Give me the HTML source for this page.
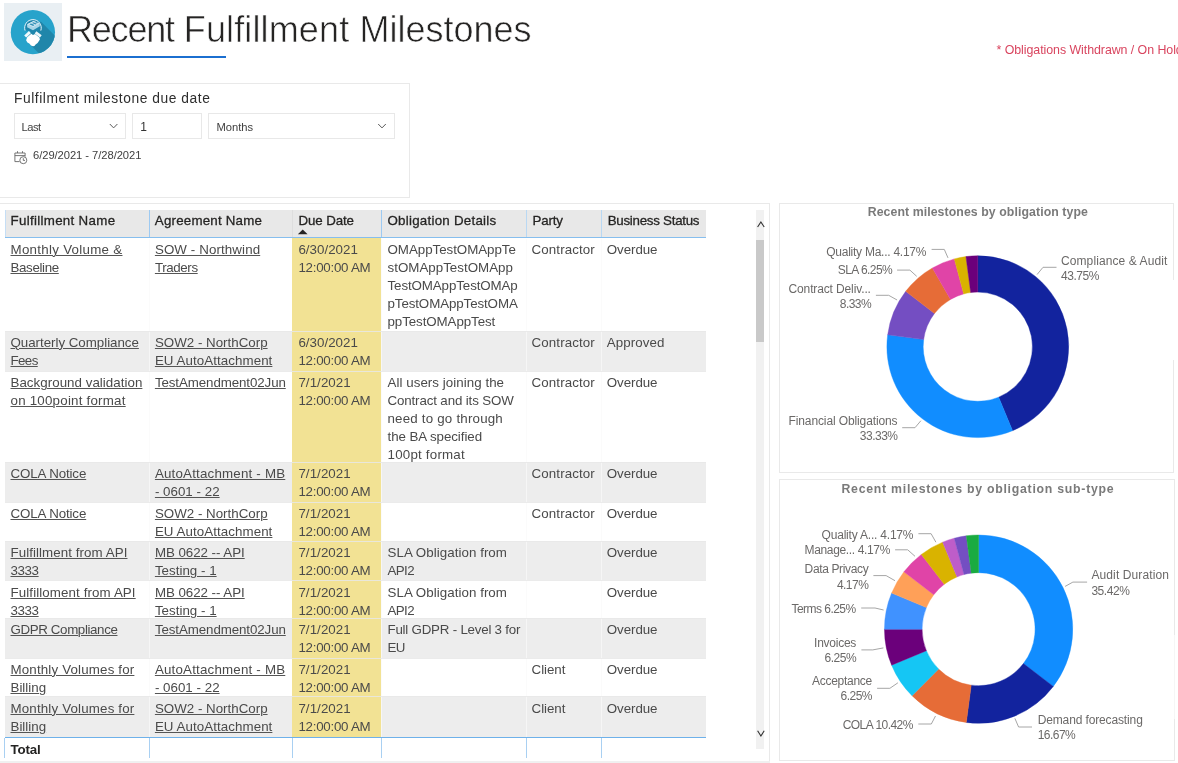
<!DOCTYPE html>
<html><head><meta charset="utf-8"><title>Recent Fulfillment Milestones</title>
<style>
html,body{margin:0;padding:0;background:#fff;}
body{width:1178px;height:763px;position:relative;overflow:hidden;font-family:"Liberation Sans",sans-serif;}
.t{position:absolute;white-space:nowrap;}
.b{position:absolute;box-sizing:border-box;}
.u{text-decoration:underline;text-decoration-thickness:1px;text-underline-offset:1px;text-decoration-color:#555;}
svg{position:absolute;left:0;top:0;}
</style></head><body><div id="root" style="position:absolute;left:0;top:0;width:1178px;height:763px;will-change:transform;background:#fff;overflow:hidden;">

<div class="b" style="left:4px;top:3px;width:58px;height:58px;background:#e9eff3;"></div>
<svg width="70" height="70" viewBox="0 0 70 70">
<defs><clipPath id="cc"><circle cx="32.9" cy="32.2" r="22.1"/></clipPath></defs>
<circle cx="32.9" cy="32.2" r="22.1" fill="#27a3cb"/>
<g clip-path="url(#cc)"><path d="M40.8 21.5 L62 42.7 L62 62 L47.5 62 L31.8 46.3 L27 38 L33 28 Z" fill="#2086aa"/></g>
<path d="M25.1 30.6 A8.3 8.3 0 1 1 40.8 30.6 L37.5 30.8 L33 33 L28.4 30.8 Z" fill="#1f86ad"/>
<path d="M25.1 30.6 A8.3 8.3 0 1 1 40.8 30.6" fill="none" stroke="#eaf6fb" stroke-width="1"/>
<path d="M27.1 24.2 L33.6 20.9 L39.8 23.2 L39.8 26.2 L33 30.2 L27.1 27.2 Z" fill="#a9d5e7"/>
<path d="M27.1 24.2 L33.6 20.9 L39.8 23.2 L33.2 26.9 Z" fill="#d2e9f3"/>
<path d="M29.3 24.3 L31 23.4 L34.6 25 L33.1 25.9 Z M31.9 23 L33.4 22.2 L37 23.7 L35.6 24.5 Z M34.4 21.8 L35.4 21.4 L38.6 22.8 L37.8 23.3 Z" fill="#2f8fb6"/>
<path d="M24.2 35.4 L28.9 31.1 L30.9 33.3 L26.2 37.6 Z" fill="#fff" fill-opacity="0.93"/>
<path d="M36.4 31.2 L41.7 35.2 L39.9 37.5 L34.7 33.5 Z" fill="#fff" fill-opacity="0.93"/>
<path d="M27.2 37.2 L31.3 33.8 L33 35 L35 33.9 L39.4 37.6 L39.9 39.6 L38.6 41.5 L37.6 43 L35.6 44.6 L34.4 46 L32.9 46.2 L31 45.4 L29.3 43.6 L27.4 42.4 L26.1 40.2 Z" fill="#fff"/>
</svg>

<div class="t" style="left:67.00px;top:6.00px;font-size:36.00px;line-height:47px;color:#252423;letter-spacing:-1.211px;-webkit-text-stroke:0.6px #fff;">Recent</div>
<div class="t" style="left:183.80px;top:6.00px;font-size:36.00px;line-height:47px;color:#252423;letter-spacing:0.132px;-webkit-text-stroke:0.6px #fff;">Fulfillment</div>
<div class="t" style="left:359.60px;top:6.00px;font-size:36.00px;line-height:47px;color:#252423;letter-spacing:-0.008px;-webkit-text-stroke:0.6px #fff;">Milestones</div>
<div class="b" style="left:66.8px;top:56.3px;width:159px;height:2.2px;background:#1b6fd0;"></div>
<div class="t" style="left:996.50px;top:42.00px;font-size:12.40px;line-height:16px;color:#d9455f;letter-spacing:-0.056px;">* Obligations Withdrawn / On Hold</div>
<div class="b" style="left:-1px;top:83px;width:411px;height:115px;border:1px solid #e9e9e9;"></div>
<div class="t" style="left:14.00px;top:90.00px;font-size:13.80px;line-height:18px;color:#2e2e2e;letter-spacing:0.560px;">Fulfilment milestone due date</div>
<div class="b" style="left:14px;top:113px;width:112px;height:26px;border:1px solid #e8e8e8;"></div>
<div class="b" style="left:132px;top:113px;width:70px;height:26px;border:1px solid #e8e8e8;"></div>
<div class="b" style="left:208px;top:113px;width:187px;height:26px;border:1px solid #e8e8e8;"></div>
<div class="t" style="left:21.50px;top:120.00px;font-size:11.20px;line-height:15px;color:#404040;letter-spacing:-0.504px;">Last</div>
<div class="t" style="left:140.30px;top:119.00px;font-size:12.00px;line-height:16px;color:#333;">1</div>
<div class="t" style="left:216.50px;top:120.00px;font-size:11.20px;line-height:15px;color:#404040;letter-spacing:-0.038px;">Months</div>
<svg width="420" height="200"><path d="M109.8 124 L113.6 127.9 L117.4 124" fill="none" stroke="#5a5a5a" stroke-width="1"/><path d="M378.2 124 L382 127.9 L385.8 124" fill="none" stroke="#5a5a5a" stroke-width="1"/><g fill="none" stroke="#666" stroke-width="0.9"><path d="M19.6 161.6 H14.9 V153 H25.1 V156.6"/><path d="M14.9 155.6 H25.1"/><path d="M17.5 151.2 V153 M22.5 151.2 V153"/><circle cx="23.3" cy="160.2" r="3.5" fill="#fff"/><path d="M23.3 158.2 V160.4 H25"/></g></svg>
<div class="t" style="left:33.00px;top:148.00px;font-size:11.20px;line-height:15px;color:#404040;letter-spacing:-0.053px;">6/29/2021 - 7/28/2021</div>
<div class="b" style="left:-1px;top:203px;width:771px;height:562px;border:1px solid #e9e9e9;"></div>
<div class="b" style="left:0px;top:761px;width:770px;height:2px;background:#f0f0f0;"></div>
<div class="b" style="left:5px;top:210px;width:701px;height:27px;background:#e8e8e8;"></div>
<div class="b" style="left:5px;top:210px;width:1px;height:28px;background:#c5def5;"></div>
<div class="b" style="left:5px;top:236.6px;width:701px;height:1.9px;background:#86beee;"></div>
<div class="t" style="left:10.50px;top:212.00px;font-size:13.33px;line-height:17px;color:#252423;letter-spacing:0.306px;-webkit-text-stroke:0.28px #252423;">Fulfillment Name</div>
<div class="t" style="left:154.80px;top:212.00px;font-size:13.33px;line-height:17px;color:#252423;letter-spacing:0.209px;-webkit-text-stroke:0.28px #252423;">Agreement Name</div>
<div class="b" style="left:148.5px;top:210px;width:1px;height:27px;background:#9dcaf2;"></div>
<div class="t" style="left:298.40px;top:212.00px;font-size:13.33px;line-height:17px;color:#252423;letter-spacing:-0.102px;-webkit-text-stroke:0.28px #252423;">Due Date</div>
<div class="b" style="left:291.5px;top:210px;width:1px;height:27px;background:#dedede;"></div>
<div class="t" style="left:387.50px;top:212.00px;font-size:13.33px;line-height:17px;color:#252423;letter-spacing:0.246px;-webkit-text-stroke:0.28px #252423;">Obligation Details</div>
<div class="b" style="left:380.5px;top:210px;width:1px;height:27px;background:#9dcaf2;"></div>
<div class="t" style="left:532.60px;top:212.00px;font-size:13.33px;line-height:17px;color:#252423;letter-spacing:-0.223px;-webkit-text-stroke:0.28px #252423;">Party</div>
<div class="b" style="left:525.5px;top:210px;width:1px;height:27px;background:#b9d8f3;"></div>
<div class="t" style="left:607.70px;top:212.00px;font-size:13.33px;line-height:17px;color:#252423;letter-spacing:-0.266px;-webkit-text-stroke:0.28px #252423;">Business Status</div>
<div class="b" style="left:600.5px;top:210px;width:1px;height:27px;background:#b9d8f3;"></div>
<svg width="400" height="240"><path d="M297.9 234.2 L302.75 229.4 L307.6 234.2 Z" fill="#252423"/></svg>
<div class="b" style="left:292px;top:238px;width:89px;height:93px;background:#f2e294;"></div>
<div class="t u" style="left:10.50px;top:241.00px;font-size:13.33px;line-height:17px;color:#4a4a4a;letter-spacing:0.285px;">Monthly Volume &amp;</div>
<div class="t u" style="left:10.50px;top:259.00px;font-size:13.33px;line-height:17px;color:#4a4a4a;letter-spacing:-0.354px;">Baseline</div>
<div class="t u" style="left:154.90px;top:241.00px;font-size:13.33px;line-height:17px;color:#4a4a4a;letter-spacing:0.107px;">SOW - Northwind</div>
<div class="t u" style="left:154.90px;top:259.00px;font-size:13.33px;line-height:17px;color:#4a4a4a;letter-spacing:-0.376px;">Traders</div>
<div class="t" style="left:298.40px;top:241.00px;font-size:13.33px;line-height:17px;color:#4a4a4a;letter-spacing:0.022px;">6/30/2021</div>
<div class="t" style="left:298.40px;top:259.00px;font-size:13.33px;line-height:17px;color:#4a4a4a;letter-spacing:-0.259px;">12:00:00 AM</div>
<div class="t" style="left:387.50px;top:241.00px;font-size:13.33px;line-height:17px;color:#4a4a4a;letter-spacing:-0.032px;">OMAppTestOMAppTe</div>
<div class="t" style="left:387.50px;top:259.00px;font-size:13.33px;line-height:17px;color:#4a4a4a;letter-spacing:0.019px;">stOMAppTestOMApp</div>
<div class="t" style="left:387.50px;top:277.00px;font-size:13.33px;line-height:17px;color:#4a4a4a;letter-spacing:-0.098px;">TestOMAppTestOMAp</div>
<div class="t" style="left:387.50px;top:295.00px;font-size:13.33px;line-height:17px;color:#4a4a4a;letter-spacing:-0.098px;">pTestOMAppTestOMA</div>
<div class="t" style="left:387.50px;top:313.00px;font-size:13.33px;line-height:17px;color:#4a4a4a;letter-spacing:-0.081px;">ppTestOMAppTest</div>
<div class="t" style="left:531.60px;top:241.00px;font-size:13.33px;line-height:17px;color:#4a4a4a;letter-spacing:0.107px;">Contractor</div>
<div class="t" style="left:606.80px;top:241.00px;font-size:13.33px;line-height:17px;color:#4a4a4a;letter-spacing:-0.075px;">Overdue</div>
<div class="b" style="left:5px;top:331px;width:701px;height:40px;background:#ededed;"></div>
<div class="b" style="left:292px;top:331px;width:89px;height:40px;background:#f2e294;"></div>
<div class="t u" style="left:10.50px;top:334.00px;font-size:13.33px;line-height:17px;color:#4a4a4a;letter-spacing:-0.026px;">Quarterly Compliance</div>
<div class="t u" style="left:10.50px;top:352.00px;font-size:13.33px;line-height:17px;color:#4a4a4a;letter-spacing:-0.600px;">Fees</div>
<div class="t u" style="left:154.90px;top:334.00px;font-size:13.33px;line-height:17px;color:#4a4a4a;letter-spacing:0.007px;">SOW2 - NorthCorp</div>
<div class="t u" style="left:154.90px;top:352.00px;font-size:13.33px;line-height:17px;color:#4a4a4a;letter-spacing:0.069px;">EU AutoAttachment</div>
<div class="t" style="left:298.40px;top:334.00px;font-size:13.33px;line-height:17px;color:#4a4a4a;letter-spacing:0.022px;">6/30/2021</div>
<div class="t" style="left:298.40px;top:352.00px;font-size:13.33px;line-height:17px;color:#4a4a4a;letter-spacing:-0.259px;">12:00:00 AM</div>
<div class="t" style="left:531.60px;top:334.00px;font-size:13.33px;line-height:17px;color:#4a4a4a;letter-spacing:0.107px;">Contractor</div>
<div class="t" style="left:606.80px;top:334.00px;font-size:13.33px;line-height:17px;color:#4a4a4a;letter-spacing:0.079px;">Approved</div>
<div class="b" style="left:292px;top:371px;width:89px;height:91px;background:#f2e294;"></div>
<div class="t u" style="left:10.50px;top:374.00px;font-size:13.33px;line-height:17px;color:#4a4a4a;letter-spacing:0.035px;">Background validation</div>
<div class="t u" style="left:10.50px;top:392.00px;font-size:13.33px;line-height:17px;color:#4a4a4a;letter-spacing:0.224px;">on 100point format</div>
<div class="t u" style="left:154.90px;top:374.00px;font-size:13.33px;line-height:17px;color:#4a4a4a;letter-spacing:-0.097px;">TestAmendment02Jun</div>
<div class="t" style="left:298.40px;top:374.00px;font-size:13.33px;line-height:17px;color:#4a4a4a;letter-spacing:0.064px;">7/1/2021</div>
<div class="t" style="left:298.40px;top:392.00px;font-size:13.33px;line-height:17px;color:#4a4a4a;letter-spacing:-0.259px;">12:00:00 AM</div>
<div class="t" style="left:387.50px;top:374.00px;font-size:13.33px;line-height:17px;color:#4a4a4a;letter-spacing:0.048px;">All users joining the</div>
<div class="t" style="left:387.50px;top:392.00px;font-size:13.33px;line-height:17px;color:#4a4a4a;letter-spacing:-0.135px;">Contract and its SOW</div>
<div class="t" style="left:387.50px;top:410.00px;font-size:13.33px;line-height:17px;color:#4a4a4a;letter-spacing:0.199px;">need to go through</div>
<div class="t" style="left:387.50px;top:428.00px;font-size:13.33px;line-height:17px;color:#4a4a4a;letter-spacing:-0.069px;">the BA specified</div>
<div class="t" style="left:387.50px;top:446.00px;font-size:13.33px;line-height:17px;color:#4a4a4a;letter-spacing:0.213px;">100pt format</div>
<div class="t" style="left:531.60px;top:374.00px;font-size:13.33px;line-height:17px;color:#4a4a4a;letter-spacing:0.107px;">Contractor</div>
<div class="t" style="left:606.80px;top:374.00px;font-size:13.33px;line-height:17px;color:#4a4a4a;letter-spacing:-0.075px;">Overdue</div>
<div class="b" style="left:5px;top:462px;width:701px;height:40px;background:#ededed;"></div>
<div class="b" style="left:292px;top:462px;width:89px;height:40px;background:#f2e294;"></div>
<div class="t u" style="left:10.50px;top:465.00px;font-size:13.33px;line-height:17px;color:#4a4a4a;letter-spacing:-0.123px;">COLA Notice</div>
<div class="t u" style="left:154.90px;top:465.00px;font-size:13.33px;line-height:17px;color:#4a4a4a;letter-spacing:0.195px;">AutoAttachment - MB</div>
<div class="t u" style="left:154.90px;top:483.00px;font-size:13.33px;line-height:17px;color:#4a4a4a;letter-spacing:0.021px;">- 0601 - 22</div>
<div class="t" style="left:298.40px;top:465.00px;font-size:13.33px;line-height:17px;color:#4a4a4a;letter-spacing:0.064px;">7/1/2021</div>
<div class="t" style="left:298.40px;top:483.00px;font-size:13.33px;line-height:17px;color:#4a4a4a;letter-spacing:-0.259px;">12:00:00 AM</div>
<div class="t" style="left:531.60px;top:465.00px;font-size:13.33px;line-height:17px;color:#4a4a4a;letter-spacing:0.107px;">Contractor</div>
<div class="t" style="left:606.80px;top:465.00px;font-size:13.33px;line-height:17px;color:#4a4a4a;letter-spacing:-0.075px;">Overdue</div>
<div class="b" style="left:292px;top:502px;width:89px;height:39px;background:#f2e294;"></div>
<div class="t u" style="left:10.50px;top:505.00px;font-size:13.33px;line-height:17px;color:#4a4a4a;letter-spacing:-0.123px;">COLA Notice</div>
<div class="t u" style="left:154.90px;top:505.00px;font-size:13.33px;line-height:17px;color:#4a4a4a;letter-spacing:0.007px;">SOW2 - NorthCorp</div>
<div class="t u" style="left:154.90px;top:523.00px;font-size:13.33px;line-height:17px;color:#4a4a4a;letter-spacing:0.069px;">EU AutoAttachment</div>
<div class="t" style="left:298.40px;top:505.00px;font-size:13.33px;line-height:17px;color:#4a4a4a;letter-spacing:0.064px;">7/1/2021</div>
<div class="t" style="left:298.40px;top:523.00px;font-size:13.33px;line-height:17px;color:#4a4a4a;letter-spacing:-0.259px;">12:00:00 AM</div>
<div class="t" style="left:531.60px;top:505.00px;font-size:13.33px;line-height:17px;color:#4a4a4a;letter-spacing:0.107px;">Contractor</div>
<div class="t" style="left:606.80px;top:505.00px;font-size:13.33px;line-height:17px;color:#4a4a4a;letter-spacing:-0.075px;">Overdue</div>
<div class="b" style="left:5px;top:541px;width:701px;height:39px;background:#ededed;"></div>
<div class="b" style="left:292px;top:541px;width:89px;height:39px;background:#f2e294;"></div>
<div class="t u" style="left:10.50px;top:544.00px;font-size:13.33px;line-height:17px;color:#4a4a4a;letter-spacing:0.072px;">Fulfillment from API</div>
<div class="t u" style="left:10.50px;top:562.00px;font-size:13.33px;line-height:17px;color:#4a4a4a;letter-spacing:-0.389px;">3333</div>
<div class="t u" style="left:154.90px;top:544.00px;font-size:13.33px;line-height:17px;color:#4a4a4a;letter-spacing:-0.042px;">MB 0622 -- API</div>
<div class="t u" style="left:154.90px;top:562.00px;font-size:13.33px;line-height:17px;color:#4a4a4a;letter-spacing:0.019px;">Testing - 1</div>
<div class="t" style="left:298.40px;top:544.00px;font-size:13.33px;line-height:17px;color:#4a4a4a;letter-spacing:0.064px;">7/1/2021</div>
<div class="t" style="left:298.40px;top:562.00px;font-size:13.33px;line-height:17px;color:#4a4a4a;letter-spacing:-0.259px;">12:00:00 AM</div>
<div class="t" style="left:387.50px;top:544.00px;font-size:13.33px;line-height:17px;color:#4a4a4a;letter-spacing:0.050px;">SLA Obligation from</div>
<div class="t" style="left:387.50px;top:562.00px;font-size:13.33px;line-height:17px;color:#4a4a4a;letter-spacing:-0.600px;">API2</div>
<div class="t" style="left:606.80px;top:544.00px;font-size:13.33px;line-height:17px;color:#4a4a4a;letter-spacing:-0.075px;">Overdue</div>
<div class="b" style="left:292px;top:580px;width:89px;height:38px;background:#f2e294;"></div>
<div class="t u" style="left:10.50px;top:584.00px;font-size:13.33px;line-height:17px;color:#4a4a4a;letter-spacing:0.106px;">Fulfilloment from API</div>
<div class="t u" style="left:10.50px;top:602.00px;font-size:13.33px;line-height:17px;color:#4a4a4a;letter-spacing:-0.389px;">3333</div>
<div class="t u" style="left:154.90px;top:584.00px;font-size:13.33px;line-height:17px;color:#4a4a4a;letter-spacing:-0.042px;">MB 0622 -- API</div>
<div class="t u" style="left:154.90px;top:602.00px;font-size:13.33px;line-height:17px;color:#4a4a4a;letter-spacing:0.019px;">Testing - 1</div>
<div class="t" style="left:298.40px;top:584.00px;font-size:13.33px;line-height:17px;color:#4a4a4a;letter-spacing:0.064px;">7/1/2021</div>
<div class="t" style="left:298.40px;top:602.00px;font-size:13.33px;line-height:17px;color:#4a4a4a;letter-spacing:-0.259px;">12:00:00 AM</div>
<div class="t" style="left:387.50px;top:584.00px;font-size:13.33px;line-height:17px;color:#4a4a4a;letter-spacing:0.050px;">SLA Obligation from</div>
<div class="t" style="left:387.50px;top:602.00px;font-size:13.33px;line-height:17px;color:#4a4a4a;letter-spacing:-0.600px;">API2</div>
<div class="t" style="left:606.80px;top:584.00px;font-size:13.33px;line-height:17px;color:#4a4a4a;letter-spacing:-0.075px;">Overdue</div>
<div class="b" style="left:5px;top:618px;width:701px;height:40px;background:#ededed;"></div>
<div class="b" style="left:292px;top:618px;width:89px;height:40px;background:#f2e294;"></div>
<div class="t u" style="left:10.50px;top:621.00px;font-size:13.33px;line-height:17px;color:#4a4a4a;letter-spacing:-0.374px;">GDPR Compliance</div>
<div class="t u" style="left:154.90px;top:621.00px;font-size:13.33px;line-height:17px;color:#4a4a4a;letter-spacing:-0.097px;">TestAmendment02Jun</div>
<div class="t" style="left:298.40px;top:621.00px;font-size:13.33px;line-height:17px;color:#4a4a4a;letter-spacing:0.064px;">7/1/2021</div>
<div class="t" style="left:298.40px;top:639.00px;font-size:13.33px;line-height:17px;color:#4a4a4a;letter-spacing:-0.259px;">12:00:00 AM</div>
<div class="t" style="left:387.50px;top:621.00px;font-size:13.33px;line-height:17px;color:#4a4a4a;letter-spacing:-0.221px;">Full GDPR - Level 3 for</div>
<div class="t" style="left:387.50px;top:639.00px;font-size:13.33px;line-height:17px;color:#4a4a4a;letter-spacing:-0.600px;">EU</div>
<div class="t" style="left:606.80px;top:621.00px;font-size:13.33px;line-height:17px;color:#4a4a4a;letter-spacing:-0.075px;">Overdue</div>
<div class="b" style="left:292px;top:658px;width:89px;height:38px;background:#f2e294;"></div>
<div class="t u" style="left:10.50px;top:661.00px;font-size:13.33px;line-height:17px;color:#4a4a4a;letter-spacing:0.165px;">Monthly Volumes for</div>
<div class="t u" style="left:10.50px;top:679.00px;font-size:13.33px;line-height:17px;color:#4a4a4a;letter-spacing:0.005px;">Billing</div>
<div class="t u" style="left:154.90px;top:661.00px;font-size:13.33px;line-height:17px;color:#4a4a4a;letter-spacing:0.195px;">AutoAttachment - MB</div>
<div class="t u" style="left:154.90px;top:679.00px;font-size:13.33px;line-height:17px;color:#4a4a4a;letter-spacing:0.021px;">- 0601 - 22</div>
<div class="t" style="left:298.40px;top:661.00px;font-size:13.33px;line-height:17px;color:#4a4a4a;letter-spacing:0.064px;">7/1/2021</div>
<div class="t" style="left:298.40px;top:679.00px;font-size:13.33px;line-height:17px;color:#4a4a4a;letter-spacing:-0.259px;">12:00:00 AM</div>
<div class="t" style="left:531.60px;top:661.00px;font-size:13.33px;line-height:17px;color:#4a4a4a;letter-spacing:-0.047px;">Client</div>
<div class="t" style="left:606.80px;top:661.00px;font-size:13.33px;line-height:17px;color:#4a4a4a;letter-spacing:-0.075px;">Overdue</div>
<div class="b" style="left:5px;top:696px;width:701px;height:41px;background:#ededed;"></div>
<div class="b" style="left:292px;top:696px;width:89px;height:41px;background:#f2e294;"></div>
<div class="t u" style="left:10.50px;top:700.00px;font-size:13.33px;line-height:17px;color:#4a4a4a;letter-spacing:0.165px;">Monthly Volumes for</div>
<div class="t u" style="left:10.50px;top:718.00px;font-size:13.33px;line-height:17px;color:#4a4a4a;letter-spacing:0.005px;">Billing</div>
<div class="t u" style="left:154.90px;top:700.00px;font-size:13.33px;line-height:17px;color:#4a4a4a;letter-spacing:0.007px;">SOW2 - NorthCorp</div>
<div class="t u" style="left:154.90px;top:718.00px;font-size:13.33px;line-height:17px;color:#4a4a4a;letter-spacing:0.069px;">EU AutoAttachment</div>
<div class="t" style="left:298.40px;top:700.00px;font-size:13.33px;line-height:17px;color:#4a4a4a;letter-spacing:0.064px;">7/1/2021</div>
<div class="t" style="left:298.40px;top:718.00px;font-size:13.33px;line-height:17px;color:#4a4a4a;letter-spacing:-0.259px;">12:00:00 AM</div>
<div class="t" style="left:531.60px;top:700.00px;font-size:13.33px;line-height:17px;color:#4a4a4a;letter-spacing:-0.047px;">Client</div>
<div class="t" style="left:606.80px;top:700.00px;font-size:13.33px;line-height:17px;color:#4a4a4a;letter-spacing:-0.075px;">Overdue</div>
<div class="b" style="left:149px;top:239px;width:1px;height:498px;background:rgba(250,250,250,0.7);"></div>
<div class="b" style="left:381px;top:239px;width:1px;height:498px;background:rgba(250,250,250,0.7);"></div>
<div class="b" style="left:526px;top:239px;width:1px;height:498px;background:rgba(250,250,250,0.7);"></div>
<div class="b" style="left:601px;top:239px;width:1px;height:498px;background:rgba(250,250,250,0.7);"></div>
<div class="b" style="left:5px;top:330.6px;width:701px;height:1px;background:rgba(231,231,231,0.85);"></div>
<div class="b" style="left:5px;top:370.6px;width:701px;height:1px;background:rgba(231,231,231,0.85);"></div>
<div class="b" style="left:5px;top:461.6px;width:701px;height:1px;background:rgba(231,231,231,0.85);"></div>
<div class="b" style="left:5px;top:501.6px;width:701px;height:1px;background:rgba(231,231,231,0.85);"></div>
<div class="b" style="left:5px;top:540.6px;width:701px;height:1px;background:rgba(231,231,231,0.85);"></div>
<div class="b" style="left:5px;top:579.6px;width:701px;height:1px;background:rgba(231,231,231,0.85);"></div>
<div class="b" style="left:5px;top:617.6px;width:701px;height:1px;background:rgba(231,231,231,0.85);"></div>
<div class="b" style="left:5px;top:657.6px;width:701px;height:1px;background:rgba(231,231,231,0.85);"></div>
<div class="b" style="left:5px;top:695.6px;width:701px;height:1px;background:rgba(231,231,231,0.85);"></div>
<div class="b" style="left:5px;top:737px;width:701px;height:1px;background:#6eb1ea;"></div>
<div class="b" style="left:4.4px;top:738px;width:1px;height:20px;background:#a9d0f2;"></div>
<div class="b" style="left:149.0px;top:738px;width:1px;height:20px;background:#a9d0f2;"></div>
<div class="b" style="left:292.0px;top:738px;width:1px;height:20px;background:#a9d0f2;"></div>
<div class="b" style="left:381.0px;top:738px;width:1px;height:20px;background:#a9d0f2;"></div>
<div class="b" style="left:526.0px;top:738px;width:1px;height:20px;background:#a9d0f2;"></div>
<div class="b" style="left:601.0px;top:738px;width:1px;height:20px;background:#a9d0f2;"></div>
<div class="t" style="left:10.50px;top:741.00px;font-size:13.33px;line-height:17px;color:#252423;font-weight:bold;letter-spacing:-0.151px;">Total</div>
<div class="b" style="left:756px;top:210px;width:8px;height:538.5px;background:#f1f1f1;"></div>
<div class="b" style="left:756px;top:240px;width:8px;height:102px;background:#c9c9c9;"></div>
<svg width="780" height="763"><path d="M757.6 227 L760.9 222 L764.2 227" fill="none" stroke="#333" stroke-width="1.1"/><path d="M757.6 730.8 L760.9 736 L764.2 730.8" fill="none" stroke="#333" stroke-width="1.1"/></svg>
<div class="b" style="left:779px;top:203px;width:395px;height:270px;border:1px solid #e9e9e9;"></div>
<div class="b" style="left:1172px;top:280px;width:3px;height:80px;background:#fff;"></div>
<div class="b" style="left:779px;top:479px;width:396px;height:282px;border:1px solid #e9e9e9;"></div>
<div class="b" style="left:1173px;top:635px;width:3px;height:84px;background:rgba(255,255,255,0.6);"></div>
<div class="t" style="left:867.70px;top:204.00px;font-size:12.30px;line-height:16px;color:#7a7a7a;font-weight:bold;letter-spacing:0.082px;">Recent milestones by obligation type</div>
<div class="t" style="left:841.50px;top:481.00px;font-size:12.30px;line-height:16px;color:#7a7a7a;font-weight:bold;letter-spacing:0.742px;">Recent milestones by obligation sub-type</div>
<svg width="1178" height="763">
<path d="M977.80 255.80A90.90 90.90 0 0 1 1012.56 430.69L998.68 397.15A54.60 54.60 0 0 0 977.80 292.10Z" fill="#12239e" stroke="#12239e" stroke-width="0.4"/>
<path d="M1012.56 430.69A90.90 90.90 0 0 1 887.68 334.81L923.67 339.56A54.60 54.60 0 0 0 998.68 397.15Z" fill="#118dff" stroke="#118dff" stroke-width="0.4"/>
<path d="M887.68 334.81A90.90 90.90 0 0 1 905.69 291.36L934.49 313.46A54.60 54.60 0 0 0 923.67 339.56Z" fill="#744ec2" stroke="#744ec2" stroke-width="0.4"/>
<path d="M905.69 291.36A90.90 90.90 0 0 1 932.36 267.97L950.51 299.41A54.60 54.60 0 0 0 934.49 313.46Z" fill="#e66c37" stroke="#e66c37" stroke-width="0.4"/>
<path d="M932.36 267.97A90.90 90.90 0 0 1 954.31 258.89L963.69 293.95A54.60 54.60 0 0 0 950.51 299.41Z" fill="#e044a7" stroke="#e044a7" stroke-width="0.4"/>
<path d="M954.31 258.89A90.90 90.90 0 0 1 965.95 256.58L970.68 292.57A54.60 54.60 0 0 0 963.69 293.95Z" fill="#d9b300" stroke="#d9b300" stroke-width="0.4"/>
<path d="M965.95 256.58A90.90 90.90 0 0 1 977.80 255.80L977.80 292.10A54.60 54.60 0 0 0 970.68 292.57Z" fill="#6b007b" stroke="#6b007b" stroke-width="0.4"/>
<path d="M978.60 535.00A94.15 94.15 0 0 1 1053.29 686.46L1023.42 663.54A56.50 56.50 0 0 0 978.60 572.65Z" fill="#118dff" stroke="#118dff" stroke-width="0.4"/>
<path d="M1053.29 686.46A94.15 94.15 0 0 1 966.30 722.49L971.22 685.17A56.50 56.50 0 0 0 1023.42 663.54Z" fill="#12239e" stroke="#12239e" stroke-width="0.4"/>
<path d="M966.30 722.49A94.15 94.15 0 0 1 912.01 695.71L938.64 669.09A56.50 56.50 0 0 0 971.22 685.17Z" fill="#e66c37" stroke="#e66c37" stroke-width="0.4"/>
<path d="M912.01 695.71A94.15 94.15 0 0 1 891.61 665.16L926.40 650.76A56.50 56.50 0 0 0 938.64 669.09Z" fill="#15c6f4" stroke="#15c6f4" stroke-width="0.4"/>
<path d="M891.61 665.16A94.15 94.15 0 0 1 884.45 629.14L922.10 629.14A56.50 56.50 0 0 0 926.40 650.76Z" fill="#6b007b" stroke="#6b007b" stroke-width="0.4"/>
<path d="M884.45 629.14A94.15 94.15 0 0 1 891.62 593.11L926.40 607.52A56.50 56.50 0 0 0 922.10 629.14Z" fill="#4092ff" stroke="#4092ff" stroke-width="0.4"/>
<path d="M891.62 593.11A94.15 94.15 0 0 1 903.92 571.81L933.79 594.74A56.50 56.50 0 0 0 926.40 607.52Z" fill="#ffa058" stroke="#ffa058" stroke-width="0.4"/>
<path d="M903.92 571.81A94.15 94.15 0 0 1 921.32 554.43L944.23 584.31A56.50 56.50 0 0 0 933.79 594.74Z" fill="#e044a7" stroke="#e044a7" stroke-width="0.4"/>
<path d="M921.32 554.43A94.15 94.15 0 0 1 942.63 542.14L957.01 576.94A56.50 56.50 0 0 0 944.23 584.31Z" fill="#d9b300" stroke="#d9b300" stroke-width="0.4"/>
<path d="M942.63 542.14A94.15 94.15 0 0 1 954.27 538.20L964.00 574.57A56.50 56.50 0 0 0 957.01 576.94Z" fill="#be5dc9" stroke="#be5dc9" stroke-width="0.4"/>
<path d="M954.27 538.20A94.15 94.15 0 0 1 966.33 535.80L971.24 573.13A56.50 56.50 0 0 0 964.00 574.57Z" fill="#744ec2" stroke="#744ec2" stroke-width="0.4"/>
<path d="M966.33 535.80A94.15 94.15 0 0 1 978.60 535.00L978.60 572.65A56.50 56.50 0 0 0 971.24 573.13Z" fill="#1aab40" stroke="#1aab40" stroke-width="0.4"/>
<polyline points="931.6,249.4 944.3,249.4 948.0,257.9" fill="none" stroke="#a6a6a6" stroke-width="1"/>
<polyline points="897.1,270.1 909.9,270.1 916.7,276.3" fill="none" stroke="#a6a6a6" stroke-width="1"/>
<polyline points="875.9,295.3 888.7,295.3 897.1,300.0" fill="none" stroke="#a6a6a6" stroke-width="1"/>
<polyline points="1037.1,274.5 1043.0,267.3 1056.5,267.3" fill="none" stroke="#a6a6a6" stroke-width="1"/>
<polyline points="902.2,427.7 915.0,427.7 920.9,420.7" fill="none" stroke="#a6a6a6" stroke-width="1"/>
<polyline points="918.4,533.7 931.1,533.7 935.9,542.2" fill="none" stroke="#a6a6a6" stroke-width="1"/>
<polyline points="895.1,549.8 907.7,549.8 915.0,556.3" fill="none" stroke="#a6a6a6" stroke-width="1"/>
<polyline points="873.4,575.6 886.1,575.6 895.0,580.7" fill="none" stroke="#a6a6a6" stroke-width="1"/>
<polyline points="861.2,608.0 875.0,608.0 883.6,610.0" fill="none" stroke="#a6a6a6" stroke-width="1"/>
<polyline points="861.4,649.9 872.8,649.9 883.4,647.9" fill="none" stroke="#a6a6a6" stroke-width="1"/>
<polyline points="877.1,688.3 889.9,688.3 897.9,682.8" fill="none" stroke="#a6a6a6" stroke-width="1"/>
<polyline points="918.3,724.0 931.3,724.0 935.5,716.0" fill="none" stroke="#a6a6a6" stroke-width="1"/>
<polyline points="1065.1,586.4 1072.9,582.1 1087.1,582.1" fill="none" stroke="#a6a6a6" stroke-width="1"/>
<polyline points="1014.9,718.4 1018.6,727.0 1032.0,727.0" fill="none" stroke="#a6a6a6" stroke-width="1"/>
</svg>
<div class="t" style="left:826.20px;top:244.00px;font-size:12.00px;line-height:16px;color:#6b6968;letter-spacing:-0.248px;">Quality Ma... 4.17%</div>
<div class="t" style="left:837.70px;top:262.00px;font-size:12.00px;line-height:16px;color:#6b6968;letter-spacing:-0.540px;">SLA 6.25%</div>
<div class="t" style="left:788.50px;top:281.00px;font-size:12.00px;line-height:16px;color:#6b6968;letter-spacing:-0.128px;">Contract Deliv...</div>
<div class="t" style="left:839.80px;top:296.00px;font-size:12.00px;line-height:16px;color:#6b6968;letter-spacing:-0.540px;">8.33%</div>
<div class="t" style="left:1061.00px;top:253.00px;font-size:12.00px;line-height:16px;color:#6b6968;letter-spacing:0.093px;">Compliance &amp; Audit</div>
<div class="t" style="left:1061.00px;top:268.00px;font-size:12.00px;line-height:16px;color:#6b6968;letter-spacing:-0.450px;">43.75%</div>
<div class="t" style="left:788.50px;top:413.00px;font-size:12.00px;line-height:16px;color:#6b6968;letter-spacing:-0.114px;">Financial Obligations</div>
<div class="t" style="left:859.80px;top:428.00px;font-size:12.00px;line-height:16px;color:#6b6968;letter-spacing:-0.500px;">33.33%</div>
<div class="t" style="left:821.60px;top:527.00px;font-size:12.00px;line-height:16px;color:#6b6968;letter-spacing:-0.205px;">Quality A... 4.17%</div>
<div class="t" style="left:804.60px;top:542.00px;font-size:12.00px;line-height:16px;color:#6b6968;letter-spacing:-0.355px;">Manage... 4.17%</div>
<div class="t" style="left:804.60px;top:561.00px;font-size:12.00px;line-height:16px;color:#6b6968;letter-spacing:-0.360px;">Data Privacy</div>
<div class="t" style="left:836.90px;top:577.00px;font-size:12.00px;line-height:16px;color:#6b6968;letter-spacing:-0.525px;">4.17%</div>
<div class="t" style="left:791.50px;top:601.00px;font-size:12.00px;line-height:16px;color:#6b6968;letter-spacing:-0.540px;">Terms 6.25%</div>
<div class="t" style="left:814.10px;top:635.00px;font-size:12.00px;line-height:16px;color:#6b6968;letter-spacing:-0.253px;">Invoices</div>
<div class="t" style="left:824.60px;top:650.00px;font-size:12.00px;line-height:16px;color:#6b6968;letter-spacing:-0.505px;">6.25%</div>
<div class="t" style="left:812.00px;top:673.00px;font-size:12.00px;line-height:16px;color:#6b6968;letter-spacing:-0.271px;">Acceptance</div>
<div class="t" style="left:840.50px;top:688.00px;font-size:12.00px;line-height:16px;color:#6b6968;letter-spacing:-0.505px;">6.25%</div>
<div class="t" style="left:842.70px;top:717.00px;font-size:12.00px;line-height:16px;color:#6b6968;letter-spacing:-0.532px;">COLA 10.42%</div>
<div class="t" style="left:1091.40px;top:567.00px;font-size:12.00px;line-height:16px;color:#6b6968;letter-spacing:0.118px;">Audit Duration</div>
<div class="t" style="left:1091.40px;top:583.00px;font-size:12.00px;line-height:16px;color:#6b6968;letter-spacing:-0.450px;">35.42%</div>
<div class="t" style="left:1037.70px;top:712.00px;font-size:12.00px;line-height:16px;color:#6b6968;letter-spacing:-0.133px;">Demand forecasting</div>
<div class="t" style="left:1037.70px;top:727.00px;font-size:12.00px;line-height:16px;color:#6b6968;letter-spacing:-0.540px;">16.67%</div>
</div></body></html>
